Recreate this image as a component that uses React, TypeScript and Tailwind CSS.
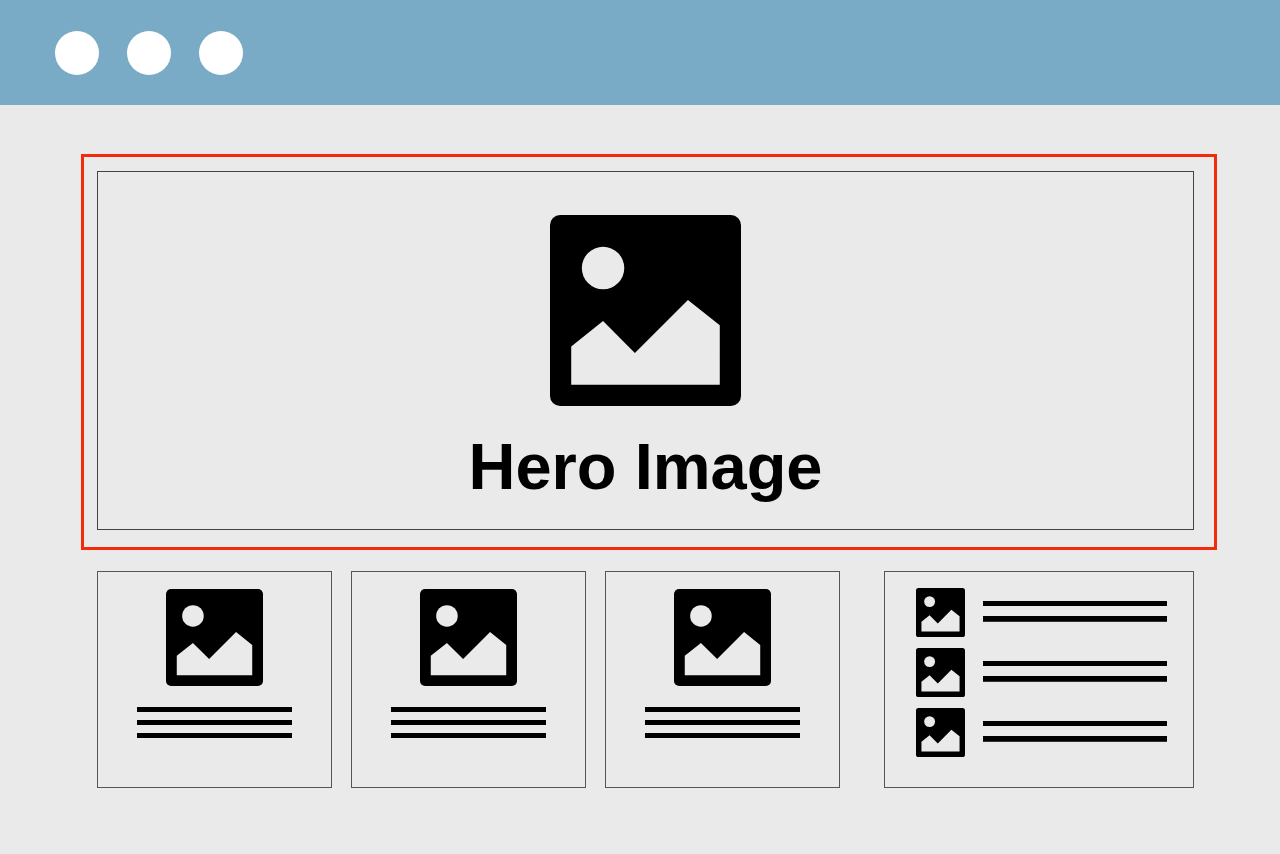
import clsx from "clsx";

const PictureIcon = ({ className }: { className?: string }) => (
  <svg viewBox="0 0 18 18" className={clsx("block shrink-0", className)} aria-hidden="true">
    <rect width="18" height="18" rx="0.95" fill="#000000" />
    <circle cx="5" cy="5" r="2" fill="#eaeaea" />
    <path d="M2 12.4 5 10l3 3 5-5 3 2.4V16H2z" fill="#eaeaea" />
  </svg>
);

// Image on top, three lines of placeholder text below
const Card = () => (
  <article className="flex flex-col items-center border border-[#555555] pt-[17px] pb-[49px]">
    <PictureIcon className="size-[97px]" />
    <div className="mt-[21px] flex w-2/3 flex-col gap-2">
      <div className="h-[5px] bg-black" />
      <div className="h-[5px] bg-black" />
      <div className="h-[5px] bg-black" />
    </div>
  </article>
);

// Small thumbnail with two lines of placeholder text next to it
const ListItem = () => (
  <li className="flex gap-[18px]">
    <PictureIcon className="size-[49px]" />
    <div className="flex flex-1 flex-col gap-[10px] pt-[13px]">
      <div className="h-[5px] bg-black" />
      <div className="h-[6px] border-b border-[#333333] bg-black" />
    </div>
  </li>
);

const App = () => {
  return (
    <div className="min-h-screen bg-[#eaeaea] font-['Liberation_Sans',Arial,sans-serif] text-black">
      {/* Browser bar */}
      <header className="flex h-[105px] items-center gap-7 bg-[#79abc7] pl-[55px]">
        <span className="size-11 rounded-full bg-white" />
        <span className="size-11 rounded-full bg-white" />
        <span className="size-11 rounded-full bg-white" />
      </header>

      <main className="pt-[49px] pb-[66px]">
        {/* Highlighted hero */}
        <section className="mr-[63px] ml-[81px] border-3 border-[#f22c0a] pt-[14px] pr-5 pb-[17px] pl-[13px]">
          <div className="flex flex-col items-center border border-[#444444] pt-[43px] pb-[26px]">
            <PictureIcon className="size-[191px]" />
            <h1 className="mt-[25px] text-[65px] leading-[72px] font-bold">Hero Image</h1>
          </div>
        </section>

        <section className="mt-[21px] mr-[86px] ml-[97px] grid grid-cols-[743fr_310fr] gap-11">
          <div className="grid grid-cols-3 gap-[19px]">
            <Card />
            <Card />
            <Card />
          </div>
          <ul className="flex flex-col gap-[11px] border border-[#555555] pt-4 pr-[26px] pl-[31px]">
            <ListItem />
            <ListItem />
            <ListItem />
          </ul>
        </section>
      </main>
    </div>
  );
};

export default App;
